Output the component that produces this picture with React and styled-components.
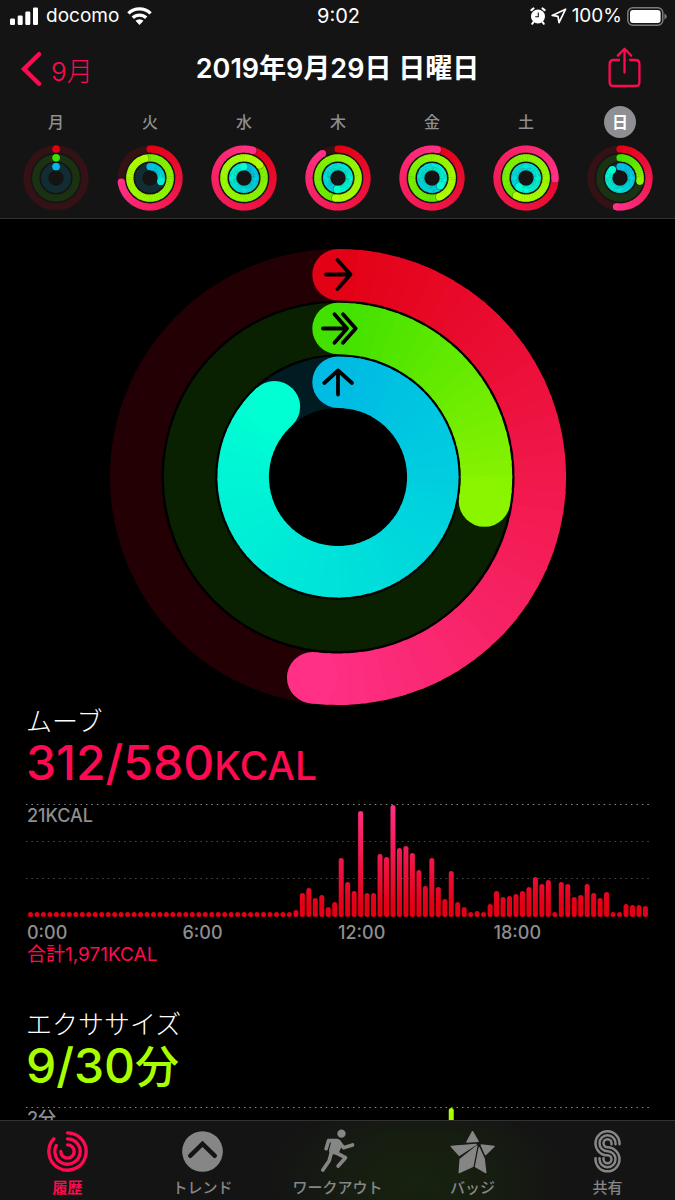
import React from "react";
import styled, { createGlobalStyle } from "styled-components";

const GlobalStyle = createGlobalStyle`
  * {
    box-sizing: border-box;
  }

  body {
    margin: 0;
    background: #000;
    color: #fff;
    font-family: Inter, "Noto Sans CJK JP", sans-serif;
  }
`;

const Screen = styled.div`
  display: flex;
  flex-direction: column;
  height: 100vh;
`;

const Header = styled.header`
  flex: none;
  background: #141414;
  border-bottom: 1px solid #323232;
`;

const StatusBar = styled.div`
  display: grid;
  grid-template-columns: 1fr auto 1fr;
  align-items: center;
  height: 32px;
  padding: 0 8px 0 10px;
  font-size: 20px;
  line-height: 32px;
`;

const StatusGroup = styled.div`
  display: flex;
  align-items: center;
  justify-content: ${(props) => (props.$end ? "flex-end" : "flex-start")};
  gap: ${(props) => (props.$end ? "5px" : "8px")};
  font-size: 19px;

  svg {
    display: block;
    flex: none;
  }
`;

const NavBar = styled.div`
  display: grid;
  grid-template-columns: 1fr auto 1fr;
  align-items: center;
  height: 74px;
  padding: 0 34px 0 20px;
`;

const BackLink = styled.a`
  display: flex;
  align-items: center;
  gap: 9px;
  color: #ff0a50;
  font-size: 26px;
  font-weight: 300;
  text-decoration: none;
`;

const Title = styled.h1`
  margin: 0;
  padding-left: 14px;
  font-size: 27px;
  font-weight: 600;
  line-height: 32px;
  white-space: nowrap;
`;

const IconButton = styled.button`
  justify-self: end;
  display: block;
  padding: 0 0 4px;
  border: 0;
  background: none;
  color: #ff0a50;
  cursor: pointer;

  svg {
    display: block;
  }
`;

const Week = styled.nav`
  display: grid;
  grid-template-columns: repeat(7, 1fr);
  padding: 0 8px 7px 9px;
`;

const Day = styled.button`
  display: flex;
  flex-direction: column;
  align-items: center;
  gap: 7px;
  padding: 0;
  border: 0;
  background: none;
  font-family: inherit;
  cursor: pointer;
`;

const DayName = styled.span`
  width: 32px;
  height: 32px;
  border-radius: 50%;
  background: ${(props) => (props.$selected ? "#8e8e93" : "transparent")};
  color: ${(props) => (props.$selected ? "#fff" : "#8e8e8e")};
  font-size: 16px;
  font-weight: ${(props) => (props.$selected ? 700 : 500)};
  line-height: 32px;
  text-align: center;
`;

const MiniRings = styled.svg`
  display: block;
  width: 66px;
  height: 66px;
`;

const Main = styled.main`
  flex: 1;
  min-height: 0;
  overflow-y: auto;
  scrollbar-width: none;
  padding: 30px 26px 0;
`;

const BigRings = styled.svg`
  display: block;
  width: 100%;
  max-width: 456px;
  margin: 0 auto;
`;

const Section = styled.section`
  display: flex;
  flex-direction: column;
  min-height: 303px;
`;

const SectionTitle = styled.h2`
  margin: 0;
  padding-top: 1px;
  font-size: 26px;
  font-weight: 300;
  line-height: 32px;
`;

const Amount = styled.p`
  margin: 0 0 16px;
  color: ${(props) => props.$color};
  font-size: 48px;
  font-weight: 500;
  line-height: 50px;
`;

const Unit = styled.span`
  font-size: ${(props) => (props.$small ? "39px" : "44px")};
  line-height: 0;
`;

const ChartBox = styled.div`
  position: relative;
`;

const ChartSvg = styled.svg`
  display: block;
  width: 100%;
`;

const Peak = styled.span`
  position: absolute;
  top: 2px;
  left: 1px;
  color: #8e8e8e;
  font-size: 18px;
  font-weight: 500;
  line-height: 20px;
`;

const Hours = styled.div`
  display: grid;
  grid-template-columns: repeat(4, 1fr);
  padding: 4px 0 0 1px;
  color: #8e8e8e;
  font-size: 18px;
  font-weight: 500;
  line-height: 22px;
`;

const Total = styled.p`
  margin: 0 0 0 1px;
  color: #ff0a50;
  font-size: 19px;
  line-height: 22px;
`;

const TabBar = styled.nav`
  flex: none;
  display: grid;
  grid-template-columns: repeat(5, 1fr);
  height: 80px;
  border-top: 1px solid #323232;
  background: radial-gradient(ellipse 150px 90px at 62% 75%, #17220f, #161d11 50%, #141414);
`;

const Tab = styled.a`
  display: flex;
  flex-direction: column;
  align-items: center;
  gap: 5px;
  padding-top: 10px;
  color: ${(props) => (props.$active ? "#ff0a50" : "#868686")};
  font-size: 15px;
  font-weight: ${(props) => (props.$active ? 700 : 500)};
  line-height: 21px;
  text-decoration: none;
  white-space: nowrap;

  svg {
    display: block;
    width: 41px;
    height: 41px;
    overflow: visible;
  }
`;

const MOVE = [[226, 0, 18], [255, 48, 134]];
const EXERCISE = [[62, 224, 0], [178, 255, 0]];
const STAND = [[0, 186, 228], [0, 255, 210]];

const mix = ([from, to], t) =>
  `rgb(${from.map((c, i) => Math.round(c + (to[i] - c) * t)).join(",")})`;

const point = (r, turn) => {
  const a = turn * 2 * Math.PI;
  return `${(r * Math.sin(a)).toFixed(2)} ${(-r * Math.cos(a)).toFixed(2)}`;
};

function Ring({ r, width, colors, value }) {
  const start = Math.max(0, value - 1);
  const span = value - start;
  const steps = Math.max(1, Math.ceil(span * 72));
  // short arcs never get to the bright end of the gradient
  const reach = Math.min(1, value * 2.4);
  const segments = [];

  for (let i = 0; i < steps; i++) {
    const from = start + (span * i) / steps;
    const to = start + (span * (i + 1)) / steps;
    const end = i === steps - 1 ? to : to + 0.003;
    segments.push(
      <path
        key={i}
        d={`M${point(r, from)}A${r} ${r} 0 0 1 ${point(r, end)}`}
        stroke={mix(colors, (to / value) * reach)}
        strokeLinecap={i === 0 && value < 1 ? "round" : "butt"}
      />
    );
  }

  const [tipX, tipY] = point(r, value).split(" ");
  const [shadowX, shadowY] = point(r, value + 0.7 / (2 * Math.PI * r)).split(" ");

  return (
    <g fill="none" strokeWidth={width}>
      <circle r={r} stroke={mix(colors, 0)} strokeOpacity="0.15" />
      {segments}
      {value >= 1 && (
        <circle cx={shadowX} cy={shadowY} r={width / 2} fill="#000" fillOpacity="0.3" stroke="none" />
      )}
      <circle cx={tipX} cy={tipY} r={width / 2} fill={mix(colors, reach)} stroke="none" />
    </g>
  );
}

const days = [
  { name: "月", rings: [0.001, 0.001, 0.001] },
  { name: "火", rings: [0.728, 1.96, 0.3] },
  { name: "水", rings: [1.05, 2.14, 1] },
  { name: "木", rings: [0.91, 1.52, 1.51] },
  { name: "金", rings: [1.03, 1.44, 1.37] },
  { name: "土", rings: [1.255, 1.58, 1.61] },
  { name: "日", rings: [0.52, 0.276, 0.883], selected: true },
];

const moveBars = [
  ...Array(41).fill(5),
  7, 24, 29, 19, 22, 10, 15,
  59, 35, 26, 106, 24, 24, 63, 60, 112, 69, 71, 64, 47, 31, 59, 30, 18, 46, 15, 10, 5, 6, 5, 13,
  26, 20, 21, 23, 26, 30, 40, 33, 37, 5, 35, 33, 20, 22, 33, 24, 19, 25, 5, 5, 13, 12, 12, 11,
];

const exerciseBars = Array(96).fill(0);
exerciseBars[65] = 112;

function Chart({ id, bars, colors, peak }) {
  return (
    <>
      <ChartBox>
        <ChartSvg viewBox="0 0 623 114" role="img" aria-label={peak}>
          <defs>
            <linearGradient id={id} gradientUnits="userSpaceOnUse" x1="0" y1="113" x2="0" y2="1">
              <stop offset="0.1" stopColor={colors[0]} />
              <stop offset="1" stopColor={colors[1]} />
            </linearGradient>
          </defs>
          {[0.5, 37.5, 74.5].map((y, i) => (
            <line
              key={y}
              x1="0"
              x2="623"
              y1={y}
              y2={y}
              stroke={i === 0 ? "#8a8a8a" : "#4c4c4c"}
              strokeDasharray="1.5 3.95"
            />
          ))}
          {bars.map(
            (h, i) =>
              h > 0 && (
                <rect
                  key={i}
                  x={2 + i * 6.473}
                  y={113 - h}
                  width="5"
                  height={h}
                  rx="2.5"
                  fill={`url(#${id})`}
                />
              )
          )}
        </ChartSvg>
        <Peak>{peak}</Peak>
      </ChartBox>
      <Hours>
        <span>0:00</span>
        <span>6:00</span>
        <span>12:00</span>
        <span>18:00</span>
      </Hours>
    </>
  );
}

const SignalIcon = () => (
  <svg width="28" height="18" viewBox="0 0 28 18" fill="currentColor">
    <rect x="0" y="11.5" width="5" height="6.5" rx="1.3" />
    <rect x="7.7" y="8.5" width="5" height="9.5" rx="1.3" />
    <rect x="15.3" y="4.5" width="5" height="13.5" rx="1.3" />
    <rect x="23" y="0.5" width="5" height="17.5" rx="1.3" />
  </svg>
);

const WifiIcon = () => (
  <svg width="25" height="18" viewBox="0 0 25 18" fill="none" stroke="currentColor" strokeWidth="3.4">
    <path d="M1.4 6.4a15.8 15.8 0 0 1 22.2 0" />
    <path d="M5.8 10.8a9.6 9.6 0 0 1 13.4 0" />
    <path d="M12.5 18l-4-4.2a5.8 5.8 0 0 1 8 0z" fill="currentColor" stroke="none" />
  </svg>
);

const AlarmIcon = () => (
  <svg width="16" height="18" viewBox="0 0 16 18" fill="none" stroke="currentColor">
    <circle cx="8" cy="9.5" r="7" fill="#fff" stroke="none" />
    <path d="M1.4 3.1l2-1.6M14.6 3.1l-2-1.6" strokeWidth="2.2" strokeLinecap="round" />
    <path d="M3.2 15.4l-1 1.4M12.8 15.4l1 1.4" strokeWidth="2" strokeLinecap="round" />
    <path d="M8.3 5.4v4.4H5.2" stroke="#141414" strokeWidth="1.1" />
  </svg>
);

const LocationIcon = () => (
  <svg width="16" height="16" viewBox="0 0 16 16" fill="none" stroke="currentColor" strokeWidth="1.7" strokeLinejoin="round">
    <path d="M1.2 7.4L14.6 1.2 8 14.6 7 8.4z" />
  </svg>
);

const BatteryIcon = () => (
  <svg width="40" height="19" viewBox="0 0 40 19">
    <rect x="0.8" y="0.8" width="35" height="17.4" rx="5" fill="none" stroke="#7c7c7c" strokeWidth="1.5" />
    <rect x="3" y="3" width="30.6" height="13" rx="3" fill="#fff" />
    <path d="M37.4 6.4q2.4 1 2.4 3.1t-2.4 3.1z" fill="#7c7c7c" />
  </svg>
);

const ChevronIcon = () => (
  <svg width="22" height="36" viewBox="0 0 22 36" fill="none" stroke="currentColor" strokeWidth="4.4" strokeLinecap="round" strokeLinejoin="miter">
    <path d="M19 3.2L4 18l15 14.8" />
  </svg>
);

const ShareIcon = () => (
  <svg width="33" height="41" viewBox="0 0 33 41" fill="none" stroke="currentColor" strokeWidth="2.3" strokeLinecap="round" strokeLinejoin="round">
    <path d="M11 13H5.4Q1.6 13 1.6 16.8v18.4Q1.6 39 5.4 39h22.2q3.8 0 3.8-3.8V16.8q0-3.8-3.8-3.8H22" />
    <path d="M16.5 25.5V2M9.8 8.6l6.7-6.8 6.7 6.8" />
  </svg>
);

const HistoryIcon = () => (
  <svg viewBox="-61.5 -61.5 123 123" fill="none" stroke="currentColor" strokeWidth="10" strokeLinecap="round">
    <path d={`M${point(56, 0)}A56 56 0 1 1 ${point(56, 0.87)}`} />
    <path d={`M${point(38, 0)}A38 38 0 1 1 ${point(38, 0.83)}`} />
    <path d={`M${point(20, 0)}A20 20 0 1 1 ${point(20, 0.75)}`} />
  </svg>
);

const TrendIcon = () => (
  <svg viewBox="-61.5 -61.5 123 123">
    <circle r="61" fill="currentColor" />
    <path d="M-37 13L0-23 37 13" fill="none" stroke="#141414" strokeWidth="13" strokeLinecap="round" />
  </svg>
);

const WorkoutIcon = () => (
  <svg viewBox="19.5 27 123 123" fill="none" stroke="currentColor" strokeWidth="11" strokeLinecap="round" strokeLinejoin="round">
    <circle cx="93" cy="35" r="12.5" fill="currentColor" stroke="none" />
    <path d="M80 56H54l-7 24" />
    <path d="M86 60l13 17 27-8" />
    <path d="M67 57h18l6 10-11 26-18-1-2-6z" fill="currentColor" strokeWidth="9" />
    <path d="M72 90l33 17-22 25" />
    <path d="M62 94l-6 22-19 28" />
  </svg>
);

const BadgeIcon = () => (
  <svg viewBox="28.5 28 123 123" fill="currentColor" stroke="currentColor" strokeWidth="4" strokeLinejoin="round">
    <path d="M90 30l17 29-34 2z" />
    <path d="M26 74l75-6-51 33z" />
    <path d="M103 73l-12 61-41 19 3-40z" />
    <path d="M110 78l15 33 5 42-31-18z" />
    <path d="M116 70l39 4-26 25z" />
  </svg>
);

const SharingIcon = () => (
  <svg viewBox="14.5 25 123 123" fill="none" stroke="currentColor" strokeWidth="7.5" strokeLinecap="round">
    {[12, 24, 36].map((r) => (
      <path
        key={r}
        d={`M${76 + r} 65V62A${r} ${r} 0 1 0 76 ${62 + r}A${48 - r} ${48 - r} 0 1 1 ${76 - (48 - r)} 110V107`}
      />
    ))}
  </svg>
);

const tabs = [
  { label: "履歴", Icon: HistoryIcon, active: true },
  { label: "トレンド", Icon: TrendIcon },
  { label: "ワークアウト", Icon: WorkoutIcon },
  { label: "バッジ", Icon: BadgeIcon },
  { label: "共有", Icon: SharingIcon },
];

function App() {
  return (
    <>
      <GlobalStyle />
      <Screen>
        <Header>
          <StatusBar>
            <StatusGroup>
              <SignalIcon />
              <span>docomo</span>
              <WifiIcon />
            </StatusGroup>
            <span>9:02</span>
            <StatusGroup $end>
              <AlarmIcon />
              <LocationIcon />
              <span>100%</span>
              <BatteryIcon />
            </StatusGroup>
          </StatusBar>

          <NavBar>
            <BackLink href="#month">
              <ChevronIcon />
              9月
            </BackLink>
            <Title>2019年9月29日 日曜日</Title>
            <IconButton type="button" aria-label="共有">
              <ShareIcon />
            </IconButton>
          </NavBar>

          <Week>
            {days.map(({ name, rings, selected }, i) => (
              <Day key={i} type="button">
                <DayName $selected={selected}>{name}</DayName>
                <MiniRings viewBox="-33 -33 66 66">
                  <Ring r={29} width={7.2} colors={MOVE} value={rings[0]} />
                  <Ring r={20.2} width={7.2} colors={EXERCISE} value={rings[1]} />
                  <Ring r={11.3} width={7.2} colors={STAND} value={rings[2]} />
                </MiniRings>
              </Day>
            ))}
          </Week>
        </Header>

        <Main>
          <BigRings viewBox="-228 -228 456 456">
            <Ring r={202.3} width={51.4} colors={MOVE} value={0.52} />
            <Ring r={148.5} width={51.4} colors={EXERCISE} value={0.276} />
            <Ring r={94.8} width={51.4} colors={STAND} value={0.883} />
            <g fill="none" stroke="#000" strokeWidth="3.8" strokeLinecap="round" strokeLinejoin="round">
              <path d="M-12-202.5H12.5M-.5-217l13 14.5-13 14.5" />
              <path d="M-15-148.5H9M-3.5-162.8L9-148.5l-12.5 14.3M5-162.8l12.7 14.3L5-134.2" />
              <path d="M0-82.5v-24M-13.7-94L0-106.5 14-94" />
            </g>
          </BigRings>

          <Section>
            <SectionTitle>ムーブ</SectionTitle>
            <Amount $color="#ff0a50">
              312/580<Unit $small>KCAL</Unit>
            </Amount>
            <Chart id="move" bars={moveBars} colors={["#e30014", "#ff3087"]} peak="21KCAL" />
            <Total>合計1,971KCAL</Total>
          </Section>

          <Section>
            <SectionTitle>エクササイズ</SectionTitle>
            <Amount $color="#a8ff00">
              9/30<Unit>分</Unit>
            </Amount>
            <Chart id="exercise" bars={exerciseBars} colors={["#3ee000", "#b0ff00"]} peak="2分" />
          </Section>
        </Main>

        <TabBar>
          {tabs.map(({ label, Icon, active }) => (
            <Tab key={label} href="#" $active={active}>
              <Icon />
              {label}
            </Tab>
          ))}
        </TabBar>
      </Screen>
    </>
  );
}

export default App;
